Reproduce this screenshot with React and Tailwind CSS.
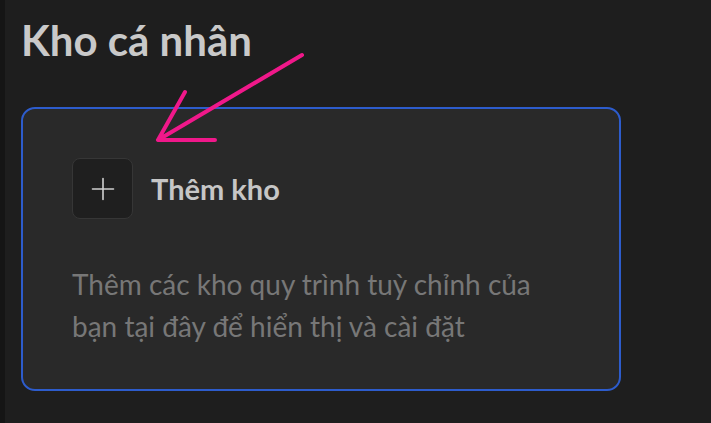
export default function App() {
  return (
    <div className="relative flex h-[423px] w-[711px] overflow-hidden bg-[#1e1e1e] font-['Lato','Noto_Sans',sans-serif]">
      <div className="w-[5px] shrink-0 bg-[#151515]" />
      <div className="flex-1 pl-[16px]">
        <h1 className="mt-[15px] text-[42px] font-bold leading-[51px] text-[#c9c9c9]">Kho cá nhân</h1>

        <div className="mt-[41px] h-[284px] w-[600px] rounded-[14px] border-2 border-[#2d5ccc] bg-[#292929] pl-[49px] pt-[49px]">
          <button className="flex items-center gap-[18px]">
            <span className="flex h-[61px] w-[61px] items-center justify-center rounded-[8px] border border-[#363636] bg-[#1f1f1f]">
              <svg width="24" height="24" viewBox="0 0 24 24" fill="none" stroke="#d0d0d0" strokeWidth="1.6" strokeLinecap="round">
                <path d="M12 1.5v21M1.5 12h21" />
              </svg>
            </span>
            <span className="text-[29px] font-bold text-[#c6c6c6]">Thêm kho</span>
          </button>

          <p className="mt-[44px] w-[490px] text-[28px] leading-[42px] text-[#777777]">
            Thêm các kho quy trình tuỳ chỉnh của bạn tại đây để hiển thị và cài đặt
          </p>
        </div>
      </div>

      {/* annotation arrow */}
      <svg className="absolute left-0 top-0" width="711" height="423" fill="none" stroke="#f0188a" strokeWidth="4" strokeLinecap="round" strokeLinejoin="round">
        <path d="M302 55L158 140M185 92L158 140L215 140" />
      </svg>
    </div>
  )
}
